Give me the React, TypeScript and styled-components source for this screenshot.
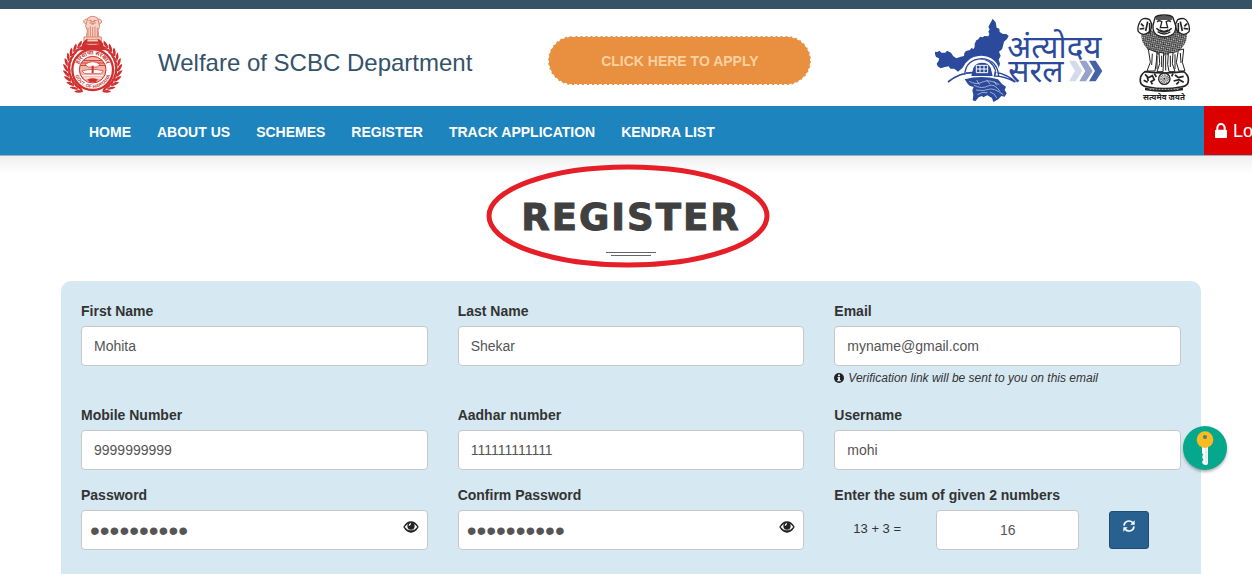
import React from "react";
import styled, { createGlobalStyle } from "styled-components";

const GlobalStyle = createGlobalStyle`
  *, *::before, *::after { box-sizing: border-box; }
  body {
    margin: 0;
    background: #fff;
    color: #333;
    font: 14px/20px "Liberation Sans", Arial, "Noto Sans", sans-serif;
  }
  button, input { font-family: inherit; }
`;

const Page = styled.div`
  display: flex;
  flex-direction: column;
  min-height: 100vh;
  overflow: hidden;
`;

const TopStrip = styled.div`
  height: 9px;
  background: #355267;
`;

const Header = styled.header`
  display: flex;
  align-items: center;
  height: 97px;
  padding: 0 61px;
`;

const Brand = styled.div`
  display: flex;
  align-items: center;
  gap: 34px;
  margin-right: 76px;
`;

const BrandName = styled.h2`
  margin: 0;
  padding-top: 10px;
  font-size: 24px;
  line-height: 32px;
  font-weight: 400;
  color: #34526a;
  white-space: nowrap;
`;

const ApplyButton = styled.button`
  flex: 0 0 263px;
  height: 49px;
  margin-top: 6px;
  border: 1px dashed #fff;
  border-radius: 25px;
  background: #e89040;
  color: #fbd0a0;
  font-size: 14px;
  line-height: 20px;
  font-weight: 700;
  cursor: pointer;
`;

const Partners = styled.div`
  display: flex;
  align-items: center;
  gap: 34px;
  margin-left: auto;
`;

const NavBar = styled.nav`
  display: flex;
  justify-content: space-between;
  height: 50px;
  padding-left: 76px;
  background: #1d84bd;
  border-bottom: 1px solid #8fb4cb;
`;

const NavList = styled.ul`
  display: flex;
  margin: 0;
  padding: 0;
  list-style: none;
`;

const NavLink = styled.a`
  display: block;
  padding: 16px 13px 13px;
  color: #fff;
  font-size: 14px;
  line-height: 20px;
  font-weight: 700;
  text-decoration: none;
`;

const LoginButton = styled.button`
  display: flex;
  align-items: center;
  gap: 6px;
  width: 48px;
  padding: 0 0 0 11px;
  overflow: hidden;
  border: 0;
  background: #dc0000;
  color: #fff;
  font-size: 18px;
  line-height: 24px;
  white-space: nowrap;
  cursor: pointer;

  svg { flex: none; }
`;

const TitleArea = styled.section`
  position: relative;
  display: flex;
  flex-direction: column;
  align-items: center;
  height: 125px;
  padding: 38px 51px 0 61px;
  background: linear-gradient(#efefef, #fff 18px);
`;

const Title = styled.h1`
  margin: 0;
  font: 700 37px/48px "DejaVu Sans", sans-serif;
  letter-spacing: 2px;
  color: #404040;
  -webkit-text-stroke: 1px #404040;
`;

const Rule = styled.span`
  width: 50px;
  height: 1px;
  margin-top: 10px;
  background: #666;
`;

const RuleShort = styled(Rule)`
  width: 40px;
  margin-top: 2px;
`;

const Highlight = styled.svg`
  position: absolute;
  top: 8px;
  left: calc(50% + 2px);
  transform: translateX(-50%);
`;

const Panel = styled.form`
  position: relative;
  flex: 1;
  display: grid;
  grid-template-columns: repeat(3, 1fr);
  align-content: start;
  column-gap: 30px;
  row-gap: 15px;
  margin: 0 51px 0 61px;
  padding: 20px 20px 24px;
  border-radius: 10px 10px 0 0;
  background: #d6e8f1;
`;

const Field = styled.div`
  display: flex;
  flex-direction: column;
  min-width: 0;
`;

const Label = styled.label`
  margin-bottom: 5px;
  font-size: 14px;
  line-height: 20px;
  font-weight: 700;
  color: #333;
`;

const Control = styled.div`
  position: relative;
  display: flex;
`;

const Input = styled.input<{ $center?: boolean }>`
  width: 100%;
  height: 40px;
  padding: 6px 12px;
  border: 1px solid #c8c8c8;
  border-radius: 4px;
  background: #fff;
  color: #555;
  font-size: 14px;
  line-height: 20px;
  text-align: ${(p) => (p.$center ? "center" : "left")};
`;

const PasswordInput = styled(Input)`
  padding: 4px 36px 2px 8px;
  font-size: 28px;
  line-height: 32px;
`;

const EyeButton = styled.button`
  position: absolute;
  top: 9px;
  right: 9px;
  display: flex;
  padding: 0;
  border: 0;
  background: none;
  cursor: pointer;
`;

const Hint = styled.small`
  display: flex;
  align-items: center;
  gap: 4px;
  font-size: 12px;
  line-height: 24px;
  font-style: italic;
`;

const SumRow = styled.div`
  display: flex;
  align-items: center;
`;

const SumText = styled.span`
  flex: 0 0 102px;
  padding: 0 0 2px 19px;
  font-size: 13px;
  line-height: 20px;
`;

const SumInput = styled(Input)`
  flex: 0 0 143px;
  width: 143px;
`;

const RefreshButton = styled.button`
  display: flex;
  justify-content: center;
  width: 40px;
  height: 38px;
  margin-left: 30px;
  padding: 8px 0 0;
  border: 1px solid #204d74;
  border-radius: 3px;
  background: #286090;
  cursor: pointer;
`;

const KeyBadge = styled.button`
  position: absolute;
  top: 145px;
  right: -26px;
  width: 44px;
  height: 44px;
  padding: 0;
  border: 0;
  border-radius: 50%;
  background: #05a88d;
  box-shadow: 0 2px 3px rgba(0, 0, 0, 0.3);
  cursor: pointer;
`;

const LockIcon = () => (
  <svg width="12" height="15" viewBox="320 128 1152 1408" preserveAspectRatio="none" fill="#fff" aria-hidden="true">
    <path d="M640 768h512v-192q0-106-75-181t-181-75-181 75-75 181v192zm832 96v576q0 40-28 68t-68 28h-960q-40 0-68-28t-28-68v-576q0-40 28-68t68-28h32v-192q0-184 132-316t316-132 316 132 132 316v192h32q40 0 68 28t28 68z" />
  </svg>
);

const EyeIcon = () => (
  <svg width="16" height="16" viewBox="0 0 48 48" aria-hidden="true">
    <path d="M3 24Q12 9 24 9t21 15Q36 39 24 39T3 24z" fill="#fff" stroke="#222" strokeWidth="4" />
    <path d="M5 26Q14 39 24 39t19-13q-8 9-19 9T5 26z" fill="#222" stroke="#222" strokeWidth="2" />
    <circle cx="24" cy="21" r="11" fill="#222" />
    <path d="M19 20q0-5 5-6" fill="none" stroke="#fff" strokeWidth="4" />
  </svg>
);

const InfoIcon = () => (
  <svg width="10" height="10" viewBox="0 0 20 20" aria-hidden="true">
    <circle cx="10" cy="10" r="10" fill="#222" />
    <path d="M8 3h4v3.500H8zM7 8h5v6h1.500v2.500h-7V14H8v-3.500H7z" fill="#d6e8f1" />
  </svg>
);

const RefreshIcon = () => (
  <svg width="12" height="12" viewBox="0 0 36 36" aria-hidden="true">
    <g fill="none" stroke="#fff" strokeWidth="5">
      <path d="M3 17A15 15 0 0 1 29 8" />
      <path d="M33 19A15 15 0 0 1 7 28" />
    </g>
    <path d="M35 1v13H22zM1 35V22h13z" fill="#fff" />
  </svg>
);

const KeyIcon = () => (
  <svg width="44" height="44" viewBox="0 0 132 132" aria-hidden="true">
    <path d="M57 60h18v50q0 7-8 7-6 0-9-5v-7l4-4-4-5v-7l3-3-4-5z" fill="#fff" />
    <path d="M69 64v46" stroke="#bfe0da" strokeWidth="3" />
    <circle cx="66" cy="41" r="25" fill="#fbb922" />
    <circle cx="66" cy="33" r="6" fill="#3a8a6a" />
  </svg>
);

const leafAngles = [24, 36, 48, 60, 72, 84, 96, 108, 120, 132, 144, 156];

const HaryanaSeal = () => (
  <svg width="63" height="86" viewBox="17 14 189 258" role="img" aria-label="Government of Haryana">
    <defs>
      <path id="sealTop" d="M67 178a45 45 0 0 1 90 0" />
      <path id="sealBottom" d="M57 178a55 55 0 0 0 110 0" />
    </defs>
    <g fill="#f6d3c8" stroke="#dd8570" strokeWidth="3">
      <path d="M99 27q-14-3-14 9l12 10zM125 27q14-3 14 9l-12 10z" />
      <path d="M97 24q15-12 30 0l6 24-5 12 3 22H93l3-22-5-12z" />
      <path d="M98 52v28M105 48v32M112 50v30M119 48v32M126 52v28M100 30q12 8 24 0M102 38h20" fill="none" />
      <path d="M86 80h52v14H86zM92 87h40" />
    </g>
    <path d="M105 29l4 3M115 32l4-3M108 41h8" stroke="#b8503e" strokeWidth="2" />
    <path d="M86 94h52l12 26H74z" fill="#cf3030" />
    <path d="M92 102h40" stroke="#fff" strokeWidth="2" />
    {leafAngles.map((a) => (
      <g key={a} fill="#cf3030">
        <g transform={`rotate(${a} 112 174)`}>
          <path d="M114 97q-10-10-24-10 4 13 24 12zM112 101q-8 9-22 9 5-12 22-11z" />
        </g>
        <g transform={`rotate(${-a} 112 174)`}>
          <path d="M110 97q10-10 24-10-4 13-24 12zM112 101q8 9 22 9-5-12-22-11z" />
        </g>
      </g>
    ))}
    <circle cx="112" cy="178" r="61" fill="#fff" stroke="#cf3030" strokeWidth="7" />
    <circle cx="112" cy="178" r="40" fill="#f3b5a8" stroke="#cf3030" strokeWidth="3" />
    <g stroke="#cf3030" strokeWidth="3">
      <path d="M84 151h56M78 158h68M75 165h74" />
    </g>
    <path d="M80 182q32-10 64 0l-8 8H88zM90 162q22-16 44 0l-8 8H98z" fill="#fff" stroke="#cf3030" strokeWidth="2" />
    <path d="M109 166h6v22h-6z" fill="#cf3030" />
    <path d="M80 196h64M86 203h52" stroke="#fff" strokeWidth="3" />
    <path d="M96 208q16-8 32 0l-8 7h-16z" fill="#cf3030" />
    <g fill="#c83a34" fontFamily="Noto Sans, sans-serif" fontWeight="700" fontSize="17">
      <text textAnchor="middle"><textPath href="#sealTop" startOffset="50%">हरियाणा सरकार</textPath></text>
      <text textAnchor="middle" fontSize="14" fontFamily="Liberation Sans, sans-serif"><textPath href="#sealBottom" startOffset="50%">GOVT. OF HARYANA</textPath></text>
    </g>
  </svg>
);

const SaralLogo = () => (
  <svg width="168" height="88" viewBox="0 -6 504 264" role="img" aria-label="Antyodaya Saral">
    <g transform="translate(5 0)">
      <path
        fill="#2c4a9c"
        d="M168 8l9 11 3 16 8 3 1 10 10 6 10 0 7 6-5 9-9 8-3 13-3 10-9 7 5 12-6 12 4 12-4 14 3 16-14-9-7-14-12-12-15-7-18-3-20 4-16 9-9 14-14 12-11-9-12 0-5-7-11 2-13 4-9-6-3-8 6-9 1-7-9-4-3-8-8-3 3-5 12 1 7-4 5 6 12 0 5-6 12 6 7 11 9 6 13-5 10-2 1-9 5-6 12-3 4-6 6 3 4-6 0-10 5-10 6-3 5-8 8 2 5-4 12 1 3-7-3-7 4-7-4-7z"
      />
      <path d="M34 198q36-30 80-28M176 168q38 8 60 30-34-18-62-18z" fill="none" stroke="#2c4a9c" strokeWidth="5" />
      <path d="M82 172q6-46 52-48 46 4 50 46" fill="none" stroke="#fff" strokeWidth="10" />
      <path d="M84 176q4-46 52-48 46 4 50 52" fill="none" stroke="#2c4a9c" strokeWidth="4" />
      <path d="M104 180l6-24q8-16 26-16 20 0 26 16l6 24z" fill="#2c4a9c" />
      <path d="M119 148h34v22h-34zM130 148v22M142 148v22M119 159h34" fill="#2c4a9c" stroke="#fff" strokeWidth="3" />
      <path
        fill="#2c4a9c"
        d="M84 190q50-14 100 0l12 14 12 8-4 10 6 10-6 10-10-2-9 10-15 8-4-12-14-8-12 6-4-4-10 4-10 12-8-3 2-16-3-14 4-10-12-4-6-6z"
      />
      <path
        d="M98 196q20 12 40 2t50 8M112 208q24 12 42 2t36 16M118 222q24 4 38-2t44 16M122 236q14-10 30-6M160 228q16 4 20 18M120 192l8 14M150 192l10 12M172 196l8 12"
        fill="none"
        stroke="#d5dcef"
        strokeWidth="2"
      />
    </g>
    <g fill="#2c4a9c" fontFamily="Noto Sans, sans-serif">
      <text x="217" y="125" fontSize="94">अंत्योदय</text>
      <text x="220" y="198" fontSize="94">सरल</text>
    </g>
    <path d="M402 134h20l20 31-20 31h-20l18-31z" fill="#d5daea" />
    <path d="M433 134h20l20 31-20 31h-20l18-31z" fill="#94a2cc" />
    <path d="M462 134h20l20 31-20 31h-20l18-31z" fill="#4460a8" />
  </svg>
);

const NationalEmblem = () => (
  <svg width="54" height="90" viewBox="22 14 162 270" role="img" aria-label="Emblem of India">
    <defs>
      <pattern id="mane" width="8" height="8" patternUnits="userSpaceOnUse" patternTransform="rotate(35)">
        <rect width="8" height="8" fill="#222" />
        <path d="M0 2h4M4 6h4" stroke="#fff" strokeWidth="3" />
      </pattern>
    </defs>
    <path d="M36 66q-6 34 18 58 16 14 48 18 34-4 50-18 26-24 18-58z" fill="url(#mane)" />
    <g fill="#fff" stroke="#222" strokeWidth="4">
      <path d="M60 34q-22-10-30 8-8 14-4 28 10 12 24 6 18-8 16-30z" />
      <path d="M144 34q22-10 30 8 8 14 4 28-10 12-24 6-18-8-16-30z" />
      <path d="M76 28q4-8 28-8 22 0 26 8l8 24q2 24-16 30-18 8-36 0-18-8-16-30z" />
    </g>
    <path d="M34 46l8 8M30 62l14-2M54 40l-6 28M172 46l-8 8M176 62l-14-2M152 40l6 28M60 44v30M146 44v30" stroke="#222" strokeWidth="5" fill="none" />
    <path d="M82 40q8-6 16 2M108 42q8-8 16-2M96 42l-4 16h22l-4-16M80 60q24 22 46 0M84 70q20 14 38 0M78 26h50M78 32h50" stroke="#222" strokeWidth="4" fill="none" />
    <path d="M90 62q12 10 26 0l-4 10H94z" fill="#222" />
    <g fill="#fff" stroke="#222" strokeWidth="3">
      <path d="M56 122l6 40-10 26h24l4-28 2-28zM88 132l2 34-8 24h18l2-56zM116 134l-2 34 4 22h18l-8-24 2-34zM146 126l-6 36 8 26h18l-8-26 4-40z" />
    </g>
    <path d="M68 136l-2 34M96 142v34M122 142v34M152 134l2 30M82 142v40M108 142v44M136 138v44" stroke="#222" strokeWidth="3" />
    <path d="M46 190q58 8 116 0 20 14 12 36-6 8-22 10-48 10-96 0-16-2-22-10-8-22 12-36z" fill="#fff" stroke="#222" strokeWidth="5" />
    <path d="M46 198l10 10 12-6 6 12-10 6 4 8M42 216l12 6M136 200l10 8 16-4M132 218l16-4 14 8M140 228l8-8M52 204l4 14M74 196l6 10M130 196l-4 8" stroke="#222" strokeWidth="5" fill="none" />
    <circle cx="104" cy="211" r="17" fill="#fff" stroke="#222" strokeWidth="4" />
    <circle cx="104" cy="211" r="9" fill="none" stroke="#555" strokeWidth="10" strokeDasharray="2 2" />
    <circle cx="104" cy="211" r="3" fill="#222" />
    <path d="M46 238q58 10 114 0v8q-56 10-114 0z" fill="#222" />
    <path d="M60 243h88" stroke="#fff" strokeWidth="2" strokeDasharray="5 4" />
    <text x="103" y="274" textAnchor="middle" fontSize="24" fontWeight="700" fontFamily="Noto Sans, sans-serif" fill="#222">सत्यमेव जयते</text>
  </svg>
);

const navItems = ["HOME", "ABOUT US", "SCHEMES", "REGISTER", "TRACK APPLICATION", "KENDRA LIST"];

interface TextFieldProps {
  id: string;
  label: string;
  value: string;
  type?: string;
  hint?: string;
}

const TextField = ({ id, label, value, type = "text", hint }: TextFieldProps) => (
  <Field>
    <Label htmlFor={id}>{label}</Label>
    <Control>
      <Input id={id} type={type} defaultValue={value} />
    </Control>
    {hint && (
      <Hint>
        <InfoIcon />
        {hint}
      </Hint>
    )}
  </Field>
);

const PasswordField = ({ id, label }: { id: string; label: string }) => {
  const [visible, setVisible] = React.useState(false);
  const Box = visible ? Input : PasswordInput;
  return (
    <Field>
      <Label htmlFor={id}>{label}</Label>
      <Control>
        <Box id={id} type={visible ? "text" : "password"} defaultValue="mohita1234" autoComplete="off" />
        <EyeButton type="button" aria-label="Show password" onClick={() => setVisible(!visible)}>
          <EyeIcon />
        </EyeButton>
      </Control>
    </Field>
  );
};

export default function App() {
  return (
    <Page>
      <GlobalStyle />
      <TopStrip />
      <Header>
        <Brand>
          <HaryanaSeal />
          <BrandName>Welfare of SCBC Department</BrandName>
        </Brand>
        <ApplyButton type="button">CLICK HERE TO APPLY</ApplyButton>
        <Partners>
          <SaralLogo />
          <NationalEmblem />
        </Partners>
      </Header>
      <NavBar>
        <NavList>
          {navItems.map((item) => (
            <li key={item}>
              <NavLink href="#">{item}</NavLink>
            </li>
          ))}
        </NavList>
        <LoginButton type="button">
          <LockIcon />
          Login
        </LoginButton>
      </NavBar>
      <TitleArea>
        <Title>REGISTER</Title>
        <Rule />
        <RuleShort />
        <Highlight width="284" height="106" viewBox="0 0 284 106" aria-hidden="true">
          <ellipse cx="142" cy="52" rx="139" ry="49" fill="none" stroke="#e51f27" strokeWidth="5" />
        </Highlight>
      </TitleArea>
      <Panel>
        <TextField id="first" label="First Name" value="Mohita" />
        <TextField id="last" label="Last Name" value="Shekar" />
        <TextField
          id="email"
          label="Email"
          type="email"
          value="myname@gmail.com"
          hint="Verification link will be sent to you on this email"
        />
        <TextField id="mobile" label="Mobile Number" type="tel" value="9999999999" />
        <TextField id="aadhar" label="Aadhar number" value="111111111111" />
        <TextField id="username" label="Username" value="mohi" />
        <PasswordField id="password" label="Password" />
        <PasswordField id="confirm" label="Confirm Password" />
        <Field>
          <Label htmlFor="sum">Enter the sum of given 2 numbers</Label>
          <SumRow>
            <SumText>13 + 3 =</SumText>
            <SumInput id="sum" $center defaultValue="16" />
            <RefreshButton type="button" aria-label="New numbers">
              <RefreshIcon />
            </RefreshButton>
          </SumRow>
        </Field>
        <KeyBadge type="button" aria-label="Password manager">
          <KeyIcon />
        </KeyBadge>
      </Panel>
    </Page>
  );
}
